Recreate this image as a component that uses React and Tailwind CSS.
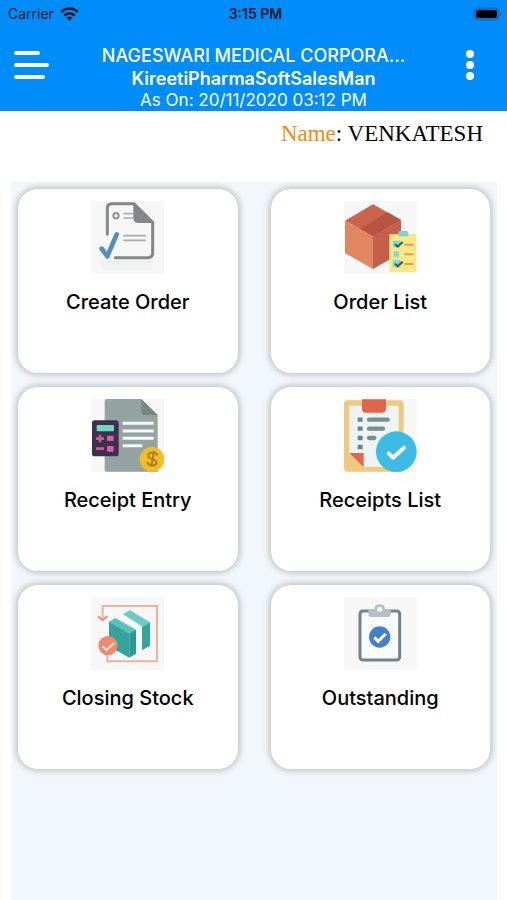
function WifiIcon() {
  return (
    <svg viewBox="0 0 56 42" className="w-[19px] h-[14px]" fill="none" stroke="#04182c" strokeWidth="8" aria-hidden="true">
      <path d="M3 15 C17 1 39 1 53 15" />
      <path d="M12 26 C21 17 35 17 44 26" />
      <path d="M28 41 L19 32 C24 27 32 27 37 32 Z" fill="#04182c" stroke="none" />
    </svg>
  );
}

function BatteryIcon() {
  return (
    <svg viewBox="0 0 30 14" className="w-[30px] h-[14px]" aria-hidden="true">
      <rect x="1" y="1" width="25" height="12" rx="4" fill="#0a78d6" stroke="#0768ba" />
      <rect x="3" y="3" width="21" height="8" rx="2" fill="#000" />
      <path d="M27.500 5 Q30 7 27.500 9 Z" fill="#0768ba" />
    </svg>
  );
}

function CreateOrderArt() {
  return (
    <>
      <path d="M80 128 V50 Q80 36 94 36 H160 L216 92 V184 Q216 198 202 198 H104" fill="none" stroke="#858688" strokeWidth="9" strokeLinecap="round" />
      <path d="M158 34 L218 94 H172 Q158 94 158 80 Z" fill="#858688" />
      <circle cx="106" cy="72" r="8" fill="none" stroke="#929395" strokeWidth="6" />
      <path d="M130 66 H154 M130 79 H156 M130 132 H194 M130 146 H194" stroke="#a9aaab" strokeWidth="5" strokeLinecap="round" />
      <path d="M63 171 L80 194 L108 128" fill="none" stroke="#5090bb" strokeWidth="14" strokeLinecap="round" strokeLinejoin="round" />
      <path d="M60 208 H218 L212 236 H66 Z" fill="#f3f3f4" />
      <path d="M76 210 H216" stroke="#e8e9ea" strokeWidth="6" />
    </>
  );
}

function OrderListArt() {
  return (
    <>
      <path d="M118 38 L202 85 L118 134 L34 87 Z" fill="#c9654c" />
      <path d="M34 87 L118 134 V232 L34 184 Z" fill="#e08660" />
      <path d="M202 85 L118 134 V232 L202 184 Z" fill="#c4604a" />
      <path d="M144 72 L162 62 L202 85 L118 134 L80 112 Z" fill="#b55542" />
      <rect x="167" y="128" width="81" height="113" rx="3" fill="#f9e684" />
      <path d="M194 134 V123 Q194 118 200 118 H218 Q224 118 224 123 V134 Z" fill="#7fd0dd" />
      <g fill="#7bdcdd">
        <rect x="177" y="147" width="23" height="20" rx="3" />
        <rect x="180" y="179" width="16" height="17" rx="3" />
        <rect x="177" y="205" width="23" height="22" rx="3" />
      </g>
      <path d="M184 157 L192 165 L207 151 M184 216 L192 224 L207 210" fill="none" stroke="#36545c" strokeWidth="6" />
      <path d="M214 159 H237 M214 188 H237 M214 217 H237" stroke="#e49a5c" strokeWidth="6" strokeLinecap="round" />
    </>
  );
}

function ReceiptEntryArt() {
  return (
    <>
      <path d="M78 28 H182 L231 76 V246 H78 Q72 246 72 240 V34 Q72 28 78 28 Z" fill="#94a3a2" />
      <path d="M182 28 L231 76 H190 Q182 76 182 68 Z" fill="#788785" />
      <path d="M126 101 H219 M126 124 H219 M126 146 H219 M126 168 H185" stroke="#f4f8f8" strokeWidth="9" />
      <rect x="34" y="92" width="80" height="108" rx="8" fill="#3f2e4e" />
      <rect x="48" y="106" width="52" height="19" rx="3" fill="#6cd8c1" />
      <path d="M58 135 V158 M46 147 H70 M46 177 H70" stroke="#c25f9f" strokeWidth="8" />
      <rect x="79" y="138" width="20" height="16" rx="3" fill="#d263a4" />
      <rect x="79" y="169" width="20" height="17" rx="3" fill="#d263a4" />
      <circle cx="214" cy="209" r="37" fill="#f2bd22" />
      <path d="M230 197 C226 184 202 187 203 199 C204 211 229 207 227 220 C225 231 203 230 200 217 M220 184 L212 232" fill="none" stroke="#a98225" strokeWidth="6" />
    </>
  );
}

function ReceiptsListArt() {
  return (
    <>
      <rect x="31" y="32" width="179" height="214" rx="12" fill="#efc980" />
      <path d="M47 48 H195 V232 H90 L47 190 Z" fill="#f0f3f3" />
      <path d="M47 190 H90 V233 Z" fill="#df6950" />
      <path d="M85 29 H157 V57 Q157 69 145 69 H97 Q85 69 85 57 Z" fill="#e2654b" />
      <path d="M72 90 H87 M72 117 H87 M72 145 H87 M72 172 H87" stroke="#69848c" strokeWidth="13" />
      <path d="M106 90 H162 M106 117 H148 M106 145 H122" stroke="#768f96" strokeWidth="13" strokeLinecap="round" />
      <circle cx="188" cy="186" r="61" fill="#3cbce5" />
      <path d="M165 191 L178 204 L211 174" fill="none" stroke="#fff" strokeWidth="12" strokeLinecap="round" strokeLinejoin="round" />
    </>
  );
}

function ClosingStockArt() {
  return (
    <>
      <path d="M66 92 V55 H229 V221 H80 V190" fill="none" stroke="#eab4a5" strokeWidth="6" />
      <path d="M52 86 L66 97 L80 86" fill="none" stroke="#ea957f" strokeWidth="7" />
      <path d="M126 80 L148 68 L208 104 L184 118 Z" fill="#6ccbc2" />
      <path d="M184 118 L208 104 V174 L184 188 Z" fill="#35a59f" />
      <path d="M126 80 L184 116 V188 L166 197 V128 L110 92 Z" fill="#f4fcfc" />
      <path d="M85 102 L104 91 L166 126 L146 140 Z" fill="#59c3ba" />
      <path d="M85 102 L146 138 V210 L85 176 Z" fill="#33a39e" />
      <path d="M146 138 L166 126 V198 L146 210 Z" fill="#2f9994" />
      <path d="M85 145 Q112 150 112 190 L85 176 Z" fill="#397f7b" />
      <circle cx="82" cy="174" r="29" fill="#ed8c72" />
      <path d="M66 176 L77 187 L101 165" fill="none" stroke="#fbe2da" strokeWidth="6" />
    </>
  );
}

function OutstandingArt() {
  return (
    <>
      <rect x="79" y="70" width="119" height="147" rx="9" fill="#fafbfb" stroke="#728488" strokeWidth="9" />
      <path d="M104 66 H122 Q122 50 138 50 Q154 50 154 66 H171 V78 Q171 88 161 88 H114 Q104 88 104 78 Z" fill="#b1c1c7" />
      <circle cx="138" cy="65" r="8" fill="#f8f9f9" />
      <circle cx="138" cy="148" r="32" fill="#4480cd" />
      <path d="M122 149 L134 161 L156 138" fill="none" stroke="#fff" strokeWidth="9" />
    </>
  );
}

const menu = [
  { label: 'Create Order', art: CreateOrderArt },
  { label: 'Order List', art: OrderListArt },
  { label: 'Receipt Entry', art: ReceiptEntryArt },
  { label: 'Receipts List', art: ReceiptsListArt },
  { label: 'Closing Stock', art: ClosingStockArt },
  { label: 'Outstanding', art: OutstandingArt },
];

function MenuCard({ label, art: Art }) {
  return (
    <button
      type="button"
      className="flex h-[184px] flex-col items-center rounded-[20px] bg-white pt-3 shadow-[0_0_6px_2px_rgba(0,0,0,0.22)]"
    >
      <svg viewBox="31 28 219 219" className="size-[73px] bg-[#f7f7f7]" aria-hidden="true">
        <Art />
      </svg>
      <span className="mt-4 text-xl leading-6 font-medium text-black">{label}</span>
    </button>
  );
}

export default function App() {
  return (
    <div className="flex min-h-screen flex-col bg-white font-['Inter',sans-serif]">
      <header className="bg-[#008df9]">
        {/* Status bar */}
        <div className="grid h-7 grid-cols-[1fr_auto_1fr] items-center pr-1 pl-2 text-sm text-[#04182c]">
          <div className="flex items-center gap-1.5">
            <span>Carrier</span>
            <WifiIcon />
          </div>
          <span className="font-semibold">3:15 PM</span>
          <div className="flex justify-end">
            <BatteryIcon />
          </div>
        </div>

        <div className="flex items-start justify-between px-3 pt-4 pb-px text-white">
          <button type="button" aria-label="Open menu" className="pt-1.5">
            <svg viewBox="0 0 40 32" className="h-8 w-10" stroke="#fff" strokeWidth="4" strokeLinecap="round">
              <path d="M4 3 H26 M4 15 H35 M4 27 H31" />
            </svg>
          </button>
          <div className="text-center">
            <h1 className="text-lg leading-[23px] font-medium">NAGESWARI MEDICAL CORPORA...</h1>
            <p className="text-lg leading-[23px] font-semibold">KireetiPharmaSoftSalesMan</p>
            <p className="text-[17px] leading-5">As On: 20/11/2020 03:12 PM</p>
          </div>
          <button type="button" aria-label="More options" className="pt-1">
            <svg viewBox="0 0 40 34" className="h-[34px] w-10" fill="#fff">
              <circle cx="15" cy="6" r="4" />
              <circle cx="15" cy="17" r="4" />
              <circle cx="15" cy="28" r="4" />
            </svg>
          </button>
        </div>
      </header>

      <p className="h-[71px] pt-2 pr-6 text-right font-['Liberation_Serif',serif] text-[23px] leading-[30px] text-black">
        <span className="text-[#f6870f]">Name</span>: VENKATESH
      </p>

      <main className="mr-2.5 ml-[11px] grow bg-[#f2f7fb] p-[7px]">
        <div className="grid grid-cols-2 gap-x-[33px] gap-y-[14px]">
          {menu.map((item) => (
            <MenuCard key={item.label} {...item} />
          ))}
        </div>
      </main>
    </div>
  );
}
